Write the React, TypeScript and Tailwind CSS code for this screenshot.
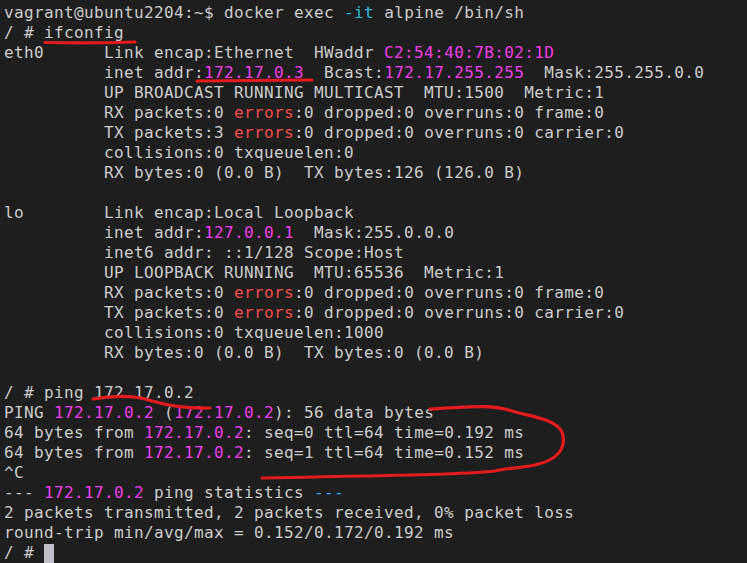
import React from "react";

type Seg = { t: string; c?: "m" | "r" | "c" | "b" };
const M = (t: string): Seg => ({ t, c: "m" });
const R = (t: string): Seg => ({ t, c: "r" });
const C = (t: string): Seg => ({ t, c: "c" });
const B = (t: string): Seg => ({ t, c: "b" });
const P = (t: string): Seg => ({ t });

const pad = "          ";

const lines: Seg[][] = [
  [P("vagrant@ubuntu2204:~$ docker exec "), C("-it"), P(" alpine /bin/sh")],
  [P("/ # ifconfig")],
  [P("eth0      Link encap:Ethernet  HWaddr "), M("C2:54:40:7B:02:1D")],
  [P(pad + "inet addr:"), M("172.17.0.3"), P("  Bcast:"), M("172.17.255.255"), P("  Mask:255.255.0.0")],
  [P(pad + "UP BROADCAST RUNNING MULTICAST  MTU:1500  Metric:1")],
  [P(pad + "RX packets:0 "), R("errors"), P(":0 dropped:0 overruns:0 frame:0")],
  [P(pad + "TX packets:3 "), R("errors"), P(":0 dropped:0 overruns:0 carrier:0")],
  [P(pad + "collisions:0 txqueuelen:0")],
  [P(pad + "RX bytes:0 (0.0 B)  TX bytes:126 (126.0 B)")],
  [P("")],
  [P("lo        Link encap:Local Loopback")],
  [P(pad + "inet addr:"), M("127.0.0.1"), P("  Mask:255.0.0.0")],
  [P(pad + "inet6 addr: ::1/128 Scope:Host")],
  [P(pad + "UP LOOPBACK RUNNING  MTU:65536  Metric:1")],
  [P(pad + "RX packets:0 "), R("errors"), P(":0 dropped:0 overruns:0 frame:0")],
  [P(pad + "TX packets:0 "), R("errors"), P(":0 dropped:0 overruns:0 carrier:0")],
  [P(pad + "collisions:0 txqueuelen:1000")],
  [P(pad + "RX bytes:0 (0.0 B)  TX bytes:0 (0.0 B)")],
  [P("")],
  [P("/ # ping 172.17.0.2")],
  [P("PING "), M("172.17.0.2"), P(" ("), M("172.17.0.2"), P("): 56 data bytes")],
  [P("64 bytes from "), M("172.17.0.2"), P(": seq=0 ttl=64 time=0.192 ms")],
  [P("64 bytes from "), M("172.17.0.2"), P(": seq=1 ttl=64 time=0.152 ms")],
  [P("^C")],
  [P("--- "), M("172.17.0.2"), P(" ping statistics "), B("---")],
  [P("2 packets transmitted, 2 packets received, 0% packet loss")],
  [P("round-trip min/avg/max = 0.152/0.172/0.192 ms")],
];

function Span({ s }: { s: Seg }) {
  if (s.c === "m") return <span className="text-[#ee3de9]">{s.t}</span>;
  if (s.c === "r") return <span className="text-[#f14c4c]">{s.t}</span>;
  if (s.c === "c") return <span className="text-[#29b8db]">{s.t}</span>;
  if (s.c === "b") return <span className="text-[#3b9ee8]">{s.t}</span>;
  return <span>{s.t}</span>;
}

export default function App() {
  return (
    <div className="relative w-[747px] h-[563px] overflow-hidden bg-[#1e1e1e]">
      <div
        className="pt-[3px] pl-[4px] text-[#cccccc] text-[16px] leading-[20px] tracking-[0.37px] whitespace-pre"
        style={{ fontFamily: '"DejaVu Sans Mono", "Liberation Mono", monospace' }}
      >
        {lines.map((l, i) => (
          <div key={i} className="h-[20px]">
            {l.map((s, j) => (
              <Span key={j} s={s} />
            ))}
          </div>
        ))}
        <div className="h-[20px] flex items-start">
          <span>{"/ # "}</span>
          <span className="inline-block w-[10px] h-[20px] mt-[1px] bg-[#c0c0c8]" />
        </div>
      </div>
      <svg
        className="absolute inset-0 pointer-events-none"
        width="747"
        height="563"
        viewBox="0 0 747 563"
        fill="none"
      >
        <g stroke="#e11b1f" strokeWidth="3.2" strokeLinecap="round" strokeLinejoin="round">
          <path d="M45 42.5 Q90 43.5 135 42" />
          <path d="M197 81 Q255 80.5 312 80" />
          <path d="M93 399 Q128 393 152 401 Q180 409 210 408" />
          <path d="M430 409 C470 407 490 404 512 411 C532 417 556 419 562 432 C567 448 558 460 535 465 C515 469 505 468 495 471 C470 474 420 475 262 478" />
        </g>
      </svg>
    </div>
  );
}
